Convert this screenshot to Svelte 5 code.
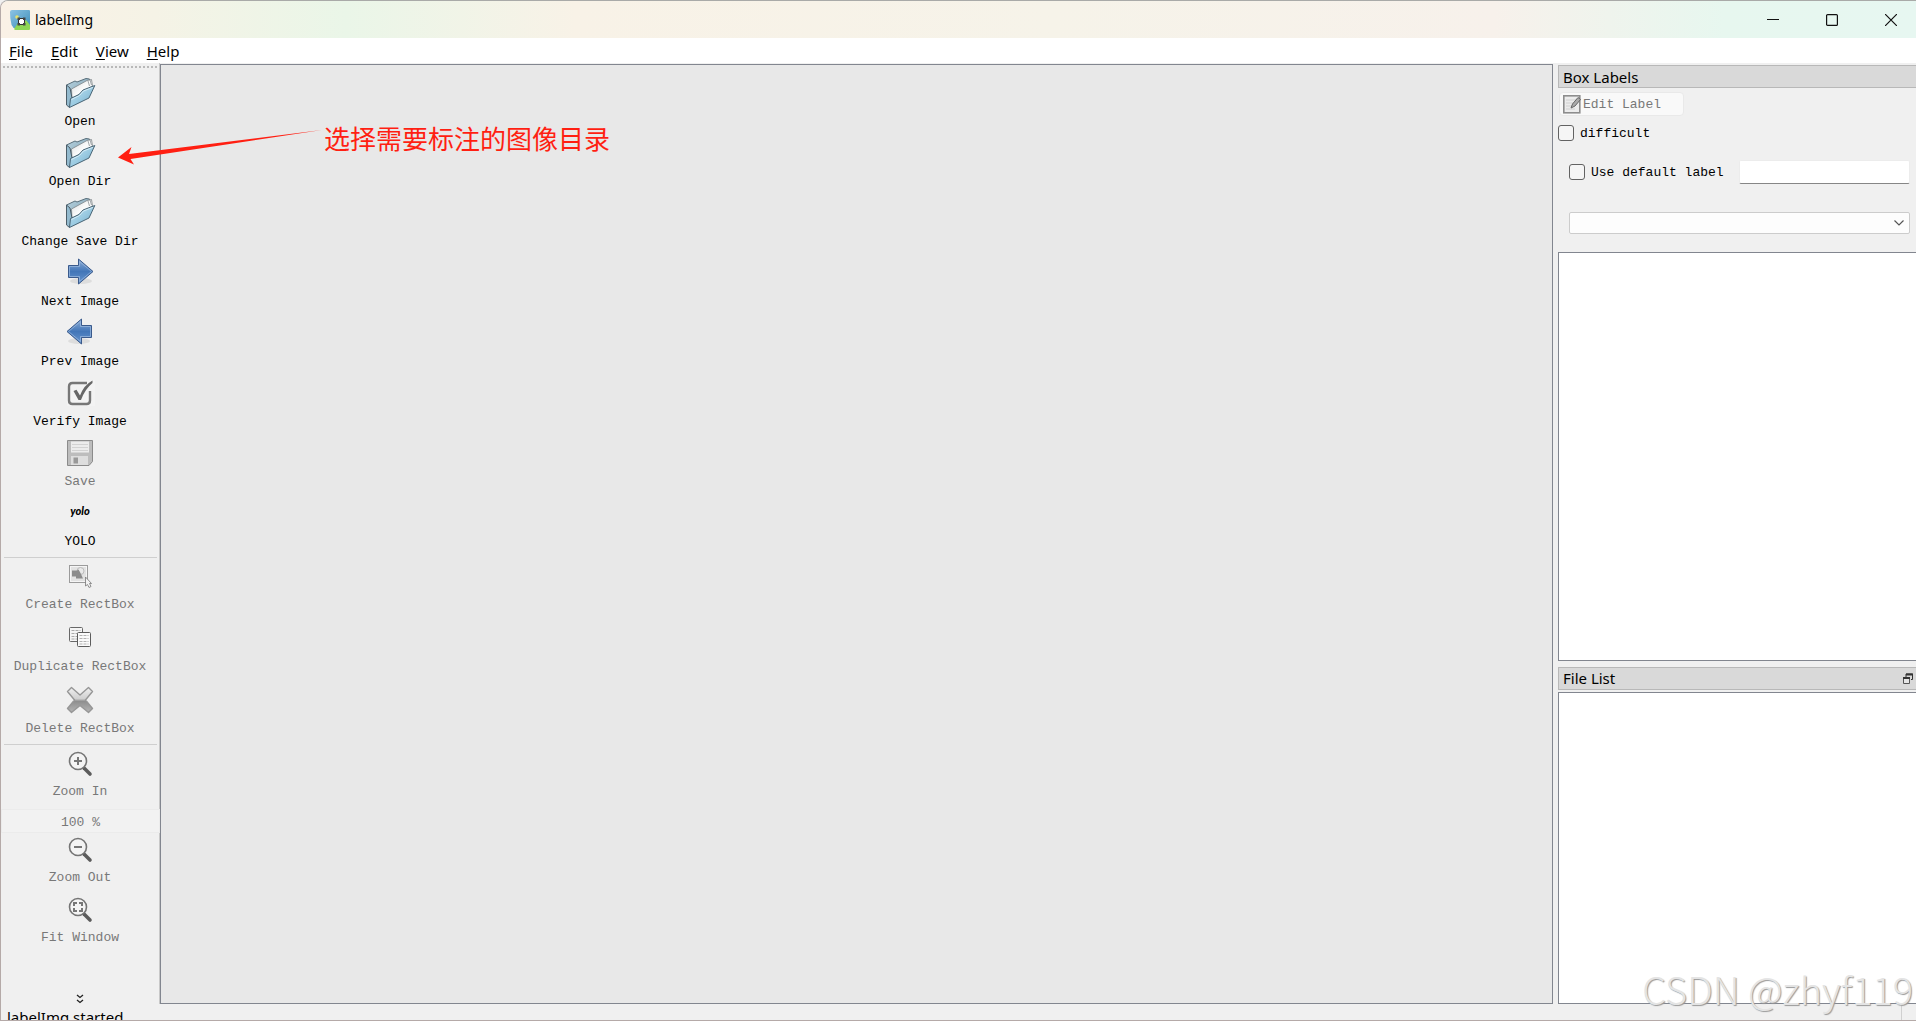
<script lang="ts">
  type Tool = { label: string; icon: string; disabled?: boolean };

  const fileTools: Tool[] = [
    { label: "Open", icon: "folder" },
    { label: "Open Dir", icon: "folder" },
    { label: "Change Save Dir", icon: "folder" },
    { label: "Next Image", icon: "next" },
    { label: "Prev Image", icon: "prev" },
    { label: "Verify Image", icon: "verify" },
    { label: "Save", icon: "save", disabled: true },
    { label: "YOLO", icon: "yolo" },
  ];

  const boxTools: Tool[] = [
    { label: "Create RectBox", icon: "create", disabled: true },
    { label: "Duplicate RectBox", icon: "copy", disabled: true },
    { label: "Delete RectBox", icon: "delete", disabled: true },
  ];

  const zoomOutTools: Tool[] = [
    { label: "Zoom Out", icon: "zoom-out", disabled: true },
    { label: "Fit Window", icon: "fit", disabled: true },
  ];

  const menus = ["File", "Edit", "View", "Help"];

  let difficult = false;
  let useDefault = false;
  let defaultLabel = "";
  let zoom = "100 %";
</script>

{#snippet toolButton(tool: Tool)}
  <button class="tool" disabled={tool.disabled}>
    <span class="tool__icon">
      <svg width="32" height="32" viewBox="0 0 32 32" aria-hidden="true">
        {#if tool.icon === "folder"}
          <path d="M2.500 8 11 4l2 1L22 1.500l3.500.5.500 3-18 17-5 6Z" fill="url(#folder-back)" stroke="#5a6f7b" stroke-linejoin="round" />
          <path d="M7.500 12 23 3.500l4.500-1 1 6.500L8 22Z" fill="url(#paper)" stroke="#7c8488" stroke-width=".8" stroke-linejoin="round" />
          <path d="m24 4 1.500 5M26 3l1.500 5" stroke="#8b9296" stroke-width=".8" />
          <path d="M2.500 8v20l3 2.500L8 21 6 11Z" fill="#93bace" stroke="#4b5d68" stroke-linejoin="round" />
          <path d="M6.500 21.500 15 17.500 19 13 30.800 8.500 25 21 5.500 30.500Z" fill="url(#folder-front)" stroke="#4a6575" stroke-linejoin="round" />
          <path d="M7.500 22.500 15.500 18.500 19.500 14 29 10.300" fill="none" stroke="#dff1fa" stroke-width=".8" />
        {:else if tool.icon === "next" || tool.icon === "prev"}
          <g class:flip={tool.icon === "prev"}>
            <ellipse cx="17" cy="24" rx="11" ry="3" fill="#000" opacity=".08" />
            <path d="M4.500 8.500h10v-6.500L29 14.500 14.500 27v-6.500h-10Z" fill="url(#arrow)" stroke="#3a5a8c" />
            <path d="M5.500 9.500h10V4.500L27.500 14.500 15.500 24.500v-5h-10Z" fill="none" stroke="#9dbbe0" opacity=".7" />
          </g>
        {:else if tool.icon === "verify"}
          <path d="M3 3h28v26H3Z" fill="#f3f3f3" />
          <path d="M23 6H8.500Q5 6 5 9.500v14Q5 27 8.500 27h14q3.500 0 3.500-3.500V14" fill="none" stroke="#777" stroke-width="2.400" />
          <path d="m9.500 14 3-1.200 3.500 5.700Q20 8 28.500 3.500V6Q21 12 17 23h-2.500Z" fill="#666" />
        {:else if tool.icon === "save"}
          <path d="M3.500 3.500h25v21l-3.500 4H3.500Z" fill="#bdbdbd" stroke="#8b8b8b" />
          <path d="M7 4.500h18v11H7Z" fill="#ececec" />
          <path d="M8 7.500h16M8 10.500h16M8 13.500h16" stroke="#d2d2d2" />
          <path d="M7 19h17v9H7Z" fill="#dedede" />
          <path d="M9.500 20.500H14v6H9.500Z" fill="#999" />
        {:else if tool.icon === "yolo"}
          <text class="yolo" x="16" y="18" text-anchor="middle">yolo</text>
        {:else if tool.icon === "create"}
          <path d="M5.500 5.500h18v17h-18Z" fill="#f5f5f5" stroke="#444" stroke-dasharray="1 1" />
          <path d="M7 7h15v14H7Z" fill="#e2e2e2" />
          <circle cx="16.500" cy="11" r="3.500" fill="#e9e9e9" stroke="#bbb" />
          <path d="M8 10.500h5l1.500-1 2 3.500 2.500 5.500h-7v-2H8Z" fill="#8b8b8b" />
          <path d="M21.500 17v9l2-1.500 1.500 3 2-1-1.500-3h2Z" fill="#f2f2f2" stroke="#777" stroke-width=".8" />
        {:else if tool.icon === "copy"}
          <rect x="5.500" y="5.500" width="13" height="14" rx="1" fill="#f5f5f5" stroke="#686868" />
          <path d="M7.500 8.500h9M7.500 11.500h9M7.500 14.500h9M7.500 17h9" stroke="#aaa" stroke-dasharray="3 1" />
          <rect x="13.500" y="10.500" width="13" height="14" rx="1" fill="#fafafa" stroke="#5c5c5c" />
          <path d="M15.500 13.500h9M15.500 16.500h9M15.500 19.500h9M15.500 22h9" stroke="#b1b1b1" stroke-dasharray="3 1" />
        {:else if tool.icon === "delete"}
          <path d="M3.500 7.500 7.500 3.500 16 11 24.500 3.500 28.500 7.500 21.500 16l7 8.500L24.500 28.500 16 21.500 7.500 28.500 3.500 24.500 10.500 16Z" fill="url(#cross)" stroke="#969696" stroke-width="1.400" stroke-linejoin="round" />
        {:else}
          <path d="m20 21 6 6" stroke="#5c5c5c" stroke-width="3.600" stroke-linecap="round" />
          <circle cx="14" cy="14" r="8.500" fill="#f4f4f4" stroke="#757575" stroke-width="1.600" />
          {#if tool.icon === "zoom-in"}
            <path d="M14 10v8M10 14h8" stroke="#777" stroke-width="2" />
          {:else if tool.icon === "zoom-out"}
            <path d="M10 14h8" stroke="#777" stroke-width="2" />
          {:else}
            <path d="M10 13v-3h3M15 10h3v3M18 15v3h-3M13 18h-3v-3" fill="none" stroke="#777" stroke-width="2" />
          {/if}
        {/if}
      </svg>
    </span>
    <span class="tool__label">{tool.label}</span>
  </button>
{/snippet}

<svg class="defs" width="0" height="0" aria-hidden="true">
  <defs>
    <linearGradient id="folder-back" x2="1" y2="1">
      <stop stop-color="#b8d3e0" /><stop offset="1" stop-color="#7396a8" />
    </linearGradient>
    <linearGradient id="paper" x2="1" y2="1">
      <stop stop-color="#d9dcde" /><stop offset=".5" stop-color="#fbfbfb" /><stop offset="1" stop-color="#e4e7e9" />
    </linearGradient>
    <linearGradient id="folder-front" x2="1" y2="1">
      <stop stop-color="#c6e2f0" /><stop offset=".5" stop-color="#9bcbe2" /><stop offset="1" stop-color="#71a6c2" />
    </linearGradient>
    <linearGradient id="arrow" x2="0" y2="1">
      <stop stop-color="#91afd6" /><stop offset=".5" stop-color="#4276b8" /><stop offset="1" stop-color="#6795cf" />
    </linearGradient>
    <linearGradient id="cross" x2="0" y2="1">
      <stop stop-color="#f0f0f0" /><stop offset=".45" stop-color="#d0d0d0" /><stop offset=".55" stop-color="#8e8e8e" /><stop offset="1" stop-color="#b5b5b5" />
    </linearGradient>
    <linearGradient id="app-sky" x2="1" y2="1">
      <stop stop-color="#8cc3e4" /><stop offset="1" stop-color="#3f8fba" />
    </linearGradient>
  </defs>
</svg>

<div class="window">
  <header class="titlebar">
    <svg width="20" height="20" viewBox="0 0 20 20" aria-hidden="true">
      <path d="M2 0h17q1 0 1 1v17H4q-1 0-1-1Q1 15 1 12Q0 8 0 2q0-2 2-2Z" fill="url(#app-sky)" />
      <path d="M4 19 10 10l3 3 3-3 4 5v4q0 1-1 1H5Z" fill="#8ed655" />
      <circle cx="7" cy="7" r="1.800" fill="#e8e36a" />
      <path d="M8.500 8.500h6v6h-6Z" fill="#fff" stroke="#333" />
      <path d="M7.500 7.500h2.500v2.500H7.500ZM13 7.500h2.500v2.500H13ZM7.500 13h2.500v2.500H7.500ZM13 13h2.500v2.500H13Z" fill="#444" />
    </svg>
    <span class="titlebar__name">labelImg</span>
    <button class="caption" aria-label="Minimize">
      <svg width="12" height="12" viewBox="0 0 12 12"><path d="M0 5.500h12" stroke="#111" /></svg>
    </button>
    <button class="caption" aria-label="Maximize">
      <svg width="12" height="12" viewBox="0 0 12 12"><rect x=".6" y=".6" width="10.800" height="10.800" rx="1" fill="none" stroke="#111" stroke-width="1.200" /></svg>
    </button>
    <button class="caption" aria-label="Close">
      <svg width="12" height="12" viewBox="0 0 12 12"><path d="m0 0 12 12M12 0 0 12" stroke="#111" stroke-width="1.200" /></svg>
    </button>
  </header>

  <nav class="menubar">
    {#each menus as menu}
      <button class="menu"><u>{menu[0]}</u>{menu.slice(1)}</button>
    {/each}
  </nav>

  <main class="body">
    <aside class="toolbar">
      <div class="toolbar__grip"></div>
      <div class="group">
        {#each fileTools as tool}{@render toolButton(tool)}{/each}
      </div>
      <hr />
      <div class="group group--boxes">
        {#each boxTools as tool}{@render toolButton(tool)}{/each}
      </div>
      <hr />
      <div class="group">
        {@render toolButton({ label: "Zoom In", icon: "zoom-in", disabled: true })}
      </div>
      <input class="zoom" aria-label="Zoom level" bind:value={zoom} disabled />
      <div class="group">
        {#each zoomOutTools as tool}{@render toolButton(tool)}{/each}
      </div>
      <button class="more" aria-label="More tools">
        <svg width="8" height="10" viewBox="0 0 8 10"><path d="m1 1 3 2.500L7 1M1 6l3 2.500L7 6" fill="none" stroke="#222" stroke-width="1.300" /></svg>
      </button>
    </aside>

    <section class="canvas">
      <div class="note">
        <svg width="204" height="36" viewBox="0 0 204 36" aria-hidden="true">
          <path d="M0 27.500 13.500 17l-2.500 7L204 0 12.500 29l3.500 5.500Z" fill="#ff1f12" />
        </svg>
        <span>选择需要标注的图像目录</span>
      </div>
    </section>

    <aside class="docks">
      <h2 class="dock-title">Box Labels</h2>
      <div class="labels">
        <button class="edit" disabled>
          <svg width="18" height="19" viewBox="0 0 18 19" aria-hidden="true">
            <rect x=".8" y=".8" width="16" height="17" fill="#ececec" stroke="#8d8d8d" stroke-width="1.600" />
            <path d="M3 5h11M3 8h9M3 11h6M3 14h9" stroke="#d0d0d0" />
            <path d="m8 13 1.500-4L15 2.500l2.500 2L12 11Z" fill="#aaa" stroke="#666" />
          </svg>
          <span>Edit Label</span>
        </button>
        <label class="check"><input type="checkbox" bind:checked={difficult} />difficult</label>
        <div class="default-row">
          <label class="check"><input type="checkbox" bind:checked={useDefault} />Use default label</label>
          <input class="default-text" type="text" aria-label="Default label" bind:value={defaultLabel} />
        </div>
        <div class="combo">
          <select aria-label="Filter labels"><option></option></select>
          <svg width="10" height="6" viewBox="0 0 10 6" aria-hidden="true"><path d="m.5.5 4.500 4.500L9.500.5" fill="none" stroke="#555" stroke-width="1.200" /></svg>
        </div>
      </div>
      <div class="list list--labels"></div>
      <h2 class="dock-title dock-title--files">
        File List
        <button class="float" aria-label="Float panel">
          <svg width="10" height="11" viewBox="0 0 10 11"><path d="M3 1h6.500v5.500H8M3 1v3" fill="none" stroke="#333" /><path d="M3 1.500h7" stroke="#333" stroke-width="2" /><path d="M.5 4.500h6v6h-6Z" fill="#e5e5e5" stroke="#555" /><path d="M0 5h7" stroke="#333" stroke-width="2" /></svg>
        </button>
      </h2>
      <div class="list list--files"></div>
    </aside>
  </main>

  <footer class="status"><span>labelImg started</span><i class="status__split"></i></footer>
  <div class="watermark">CSDN @zhyf119</div>
</div>

<style>
  :global(body) {
    margin: 0;
    background: #f0f0f0;
  }

  .window {
    position: relative;
    box-sizing: border-box;
    display: flex;
    flex-direction: column;
    height: 100vh;
    overflow: hidden;
    border: solid #b5aaa8;
    border-width: 1px 0 1px 1px;
    border-top-color: #a9aaa8;
    border-radius: 8px 0 0 0;
    background: #f0f0f0;
    color: #000;
    font-family: "Noto Sans", "Open Sans", sans-serif;
    font-size: 15px;
  }

  .defs {
    position: absolute;
  }

  button {
    padding: 0;
    border: 0;
    background: none;
    color: inherit;
    font: inherit;
  }

  .titlebar {
    flex: none;
    display: flex;
    align-items: center;
    height: 37px;
    padding-left: 9px;
    background: linear-gradient(90deg, #faf1e6 0%, #f5f3e6 8%, #eaf6e8 18%, #f8f2e7 30%, #f6f3e9 55%, #f7f1eb 78%, #e7f7ef 90%, #e7f7f1 100%);
  }

  .titlebar__name {
    flex: 1;
    margin-left: 5px;
    font-size: 14px;
  }

  .caption {
    display: flex;
    align-items: center;
    justify-content: center;
    width: 59px;
    height: 36px;
  }

  .caption:last-child {
    margin-right: -4px;
  }

  .menubar {
    flex: none;
    display: flex;
    gap: 18px;
    height: 25px;
    padding-left: 8px;
    background: #fff;
  }

  .menu u {
    text-underline-offset: 2px;
  }

  .body {
    flex: 1;
    display: flex;
    min-height: 0;
  }

  .toolbar {
    box-sizing: border-box;
    flex: none;
    display: flex;
    flex-direction: column;
    width: 159px;
    border-right: 1px solid #c8c8c8;
    font-family: "Liberation Mono", monospace;
    font-size: 13px;
  }

  .toolbar__grip {
    height: 2px;
    margin: 3px 2px 11px;
    background: repeating-linear-gradient(90deg, #b9b9b9 0 2px, transparent 2px 4px);
  }

  .group {
    display: flex;
    flex-direction: column;
    gap: 6px;
  }

  .group--boxes {
    gap: 8px;
  }

  .tool {
    display: flex;
    flex-direction: column;
    align-items: center;
    gap: 4px;
  }

  .tool:disabled,
  .zoom:disabled,
  .edit:disabled {
    color: #787878;
  }

  .tool__icon {
    display: flex;
    align-items: center;
    height: 28px;
  }

  .tool__label {
    line-height: 22px;
    white-space: nowrap;
  }

  .flip {
    transform: translateX(32px) scaleX(-1);
  }

  .yolo {
    font: italic 900 11px Lato, sans-serif;
  }

  hr {
    width: 153px;
    height: 1px;
    margin: 4px auto;
    border: 0;
    background: #cfcfcf;
  }

  .zoom {
    box-sizing: border-box;
    height: 24px;
    margin: 6px -1px 2px 0;
    padding: 2px 0 0;
    border: 1px solid #ebebeb;
    background: #f2f2f2;
    font: inherit;
    text-align: center;
  }

  .more {
    display: flex;
    justify-content: center;
    margin-top: auto;
  }

  .canvas {
    flex: 1;
    min-width: 0;
    margin-top: 1px;
    border: 1px solid #82868f;
    background: #e8e8e8;
  }

  .note {
    position: absolute;
    top: 119px;
    left: 117px;
    display: flex;
    gap: 2px;
    color: #ff1f12;
    font-family: "Noto Sans CJK SC", sans-serif;
    font-size: 26px;
    line-height: 36px;
  }

  .note svg {
    margin-top: 10px;
  }

  .docks {
    flex: none;
    display: flex;
    flex-direction: column;
    width: 358px;
    margin: 2px 0 0 5px;
  }

  .dock-title {
    box-sizing: border-box;
    display: flex;
    align-items: center;
    justify-content: space-between;
    height: 23px;
    margin: 0;
    padding-left: 4px;
    border: 1px solid #b8b8b8;
    border-right: 0;
    background: #d9d9d9;
    font-size: 15px;
    font-weight: 400;
  }

  .dock-title--files {
    margin: 6px 0 2px;
  }

  .float {
    display: flex;
    margin-right: 3px;
  }

  .labels {
    font-family: "Liberation Mono", monospace;
    font-size: 13px;
  }

  .edit {
    box-sizing: border-box;
    display: flex;
    align-items: center;
    gap: 2px;
    width: 125px;
    height: 24px;
    margin: 4px 0 8px 1px;
    padding-left: 3px;
    border: 1px solid #e9e9e9;
    border-radius: 4px;
    background: #f9f9f9;
  }

  .check {
    display: flex;
    align-items: center;
    gap: 6px;
    height: 18px;
    white-space: nowrap;
  }

  .check input {
    box-sizing: border-box;
    appearance: none;
    width: 16px;
    height: 16px;
    margin: 0;
    border: 1px solid #626262;
    border-radius: 3px;
    background: #f5f5f5;
  }

  .default-row {
    display: flex;
    align-items: center;
    gap: 15px;
    margin: 18px 6px 0 11px;
  }

  .default-text {
    box-sizing: border-box;
    flex: 1;
    min-width: 0;
    height: 24px;
    border: 1px solid #ececec;
    border-bottom-color: #868686;
    border-radius: 2px;
    background: #fff;
  }

  .combo {
    display: grid;
    align-items: center;
    margin: 28px 6px 18px 11px;
  }

  .combo select,
  .combo svg {
    grid-area: 1 / 1;
  }

  .combo select {
    appearance: none;
    width: 100%;
    height: 22px;
    border: 1px solid #ccc;
    border-radius: 2px;
    background: #fdfdfd;
  }

  .combo svg {
    justify-self: end;
    margin-right: 6px;
    pointer-events: none;
  }

  .list {
    box-sizing: border-box;
    border: 1px solid #82868f;
    border-right: 0;
    background: #fff;
  }

  .list--labels {
    flex: 409 1 0;
  }

  .list--files {
    flex: 312 1 0;
  }

  .status {
    flex: none;
    display: flex;
    justify-content: space-between;
    height: 16px;
    overflow: hidden;
    padding: 0 14px 0 6px;
    line-height: 26px;
  }

  .status__split {
    width: 1px;
    margin-top: 2px;
    background: #d0d0d0;
  }

  .watermark {
    position: absolute;
    right: 3px;
    bottom: 9px;
    color: #e4e4e4;
    font-family: "Noto Sans CJK SC", sans-serif;
    font-size: 38px;
    font-weight: 300;
    line-height: 44px;
    text-shadow: 1px 1px 1px #999;
  }
</style>
